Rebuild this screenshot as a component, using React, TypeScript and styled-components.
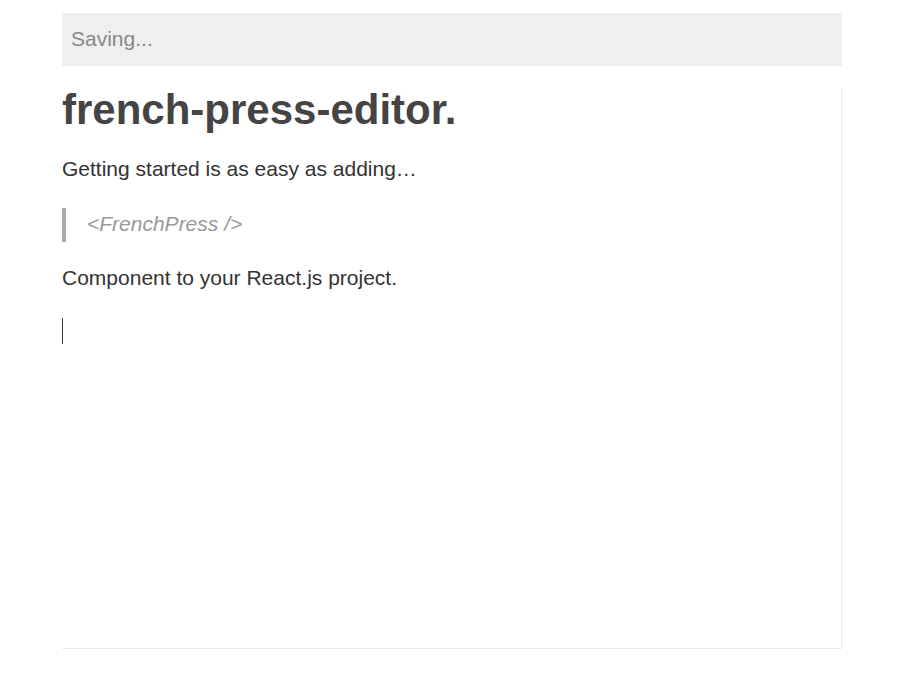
import styled, { createGlobalStyle } from "styled-components"

const GlobalStyle = createGlobalStyle`
  body {
    margin: 0;
    background: #fff;
    font-family: "Liberation Sans", Arial, sans-serif;
  }
`

const Page = styled.div`
  width: 780px;
  padding: 13px 0 0 62px;
`

const StatusBar = styled.div`
  display: flex;
  align-items: center;
  height: 53px;
  padding: 0 0 2px 9px;
  box-sizing: border-box;
  background-color: #efefef;
  color: #888;
  font-size: 21px;
`

const Editor = styled.div`
  box-sizing: border-box;
  margin-top: 22px;
  height: 561px;
  border-right: 1px solid #ebebeb;
  border-bottom: 1px solid #ebebeb;
  color: #333;
`

const Heading = styled.h1`
  margin: 0;
  font-size: 42px;
  line-height: 43px;
  font-weight: bold;
  color: #444;
`

const Paragraph = styled.p<{ $gap: number }>`
  margin: ${(p) => p.$gap}px 0 0;
  font-size: 21px;
  line-height: 28px;
`

const Quote = styled.blockquote`
  margin: 25px 0 0;
  padding: 2px 0 4px 21px;
  border-left: 4px solid #aaa;
  color: #999;
  font-style: italic;
  font-size: 21px;
  line-height: 28px;
`

const Caret = styled.div`
  margin-top: 26px;
  width: 1px;
  height: 26px;
  background-color: #333;
`

export default function App() {
  return (
    <>
      <GlobalStyle />
      <Page>
        <StatusBar>Saving...</StatusBar>
        <Editor>
          <Heading>french-press-editor.</Heading>
          <Paragraph $gap={24}>Getting started is as easy as adding…</Paragraph>
          <Quote>&lt;FrenchPress /&gt;</Quote>
          <Paragraph $gap={22}>Component to your React.js project.</Paragraph>
          <Caret />
        </Editor>
      </Page>
    </>
  )
}
